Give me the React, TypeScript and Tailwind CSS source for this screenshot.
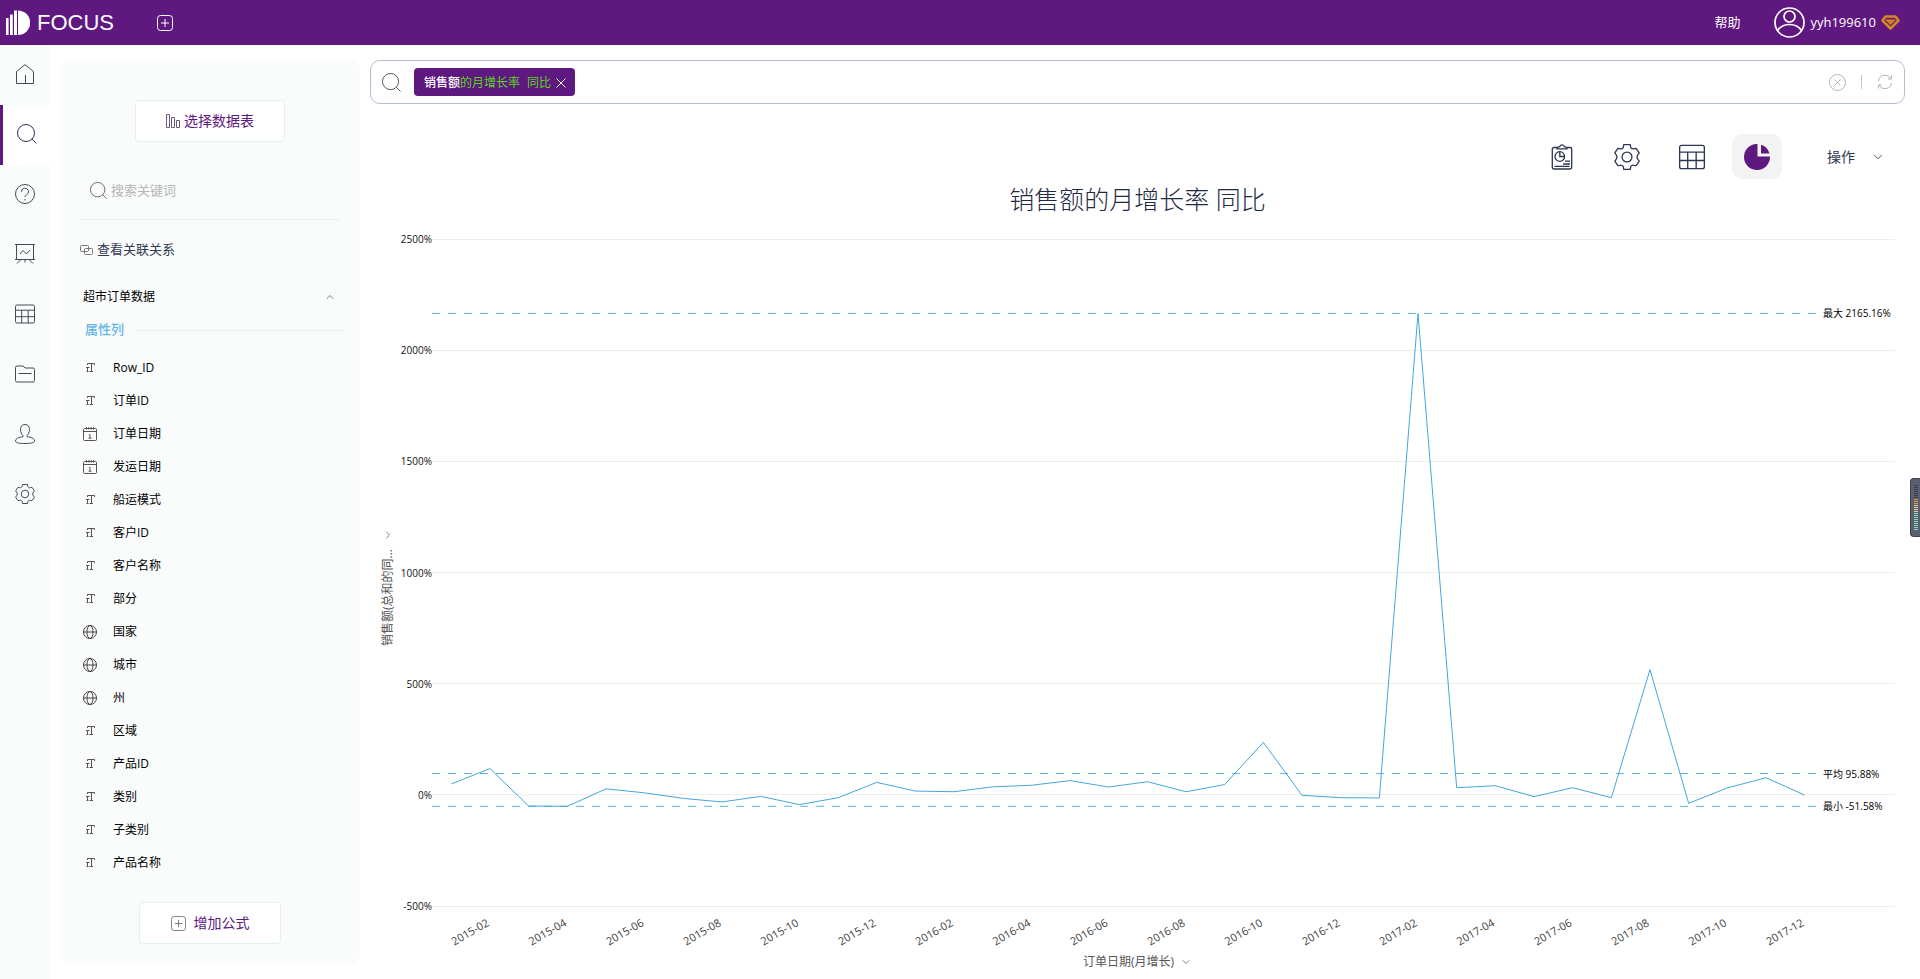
import { useLayoutEffect, useRef, useState, type ReactNode } from "react";
import { ChevronDown, ChevronLeft, ChevronUp } from "lucide-react";

const SERIES = [
  49, 118, -50.5, -51.58, 27, 9, -16, -32, -7, -44, -13, 56,
  17, 14, 36, 43, 64, 35, 59, 14, 46, 236, -2, -13,
  -14, 2165.16, 32, 41, -8, 32, -13, 563, -38, 31, 77, -1,
];

const Y_TICKS = [2500, 2000, 1500, 1000, 500, 0, -500];

const MARKS = [
  { label: "最大 2165.16%", value: 2165.16 },
  { label: "平均 95.88%", value: 95.88 },
  { label: "最小 -51.58%", value: -51.58 },
];

type ColumnType = "text" | "date" | "geo";

const COLUMNS: { name: string; type: ColumnType }[] = [
  { name: "Row_ID", type: "text" },
  { name: "订单ID", type: "text" },
  { name: "订单日期", type: "date" },
  { name: "发运日期", type: "date" },
  { name: "船运模式", type: "text" },
  { name: "客户ID", type: "text" },
  { name: "客户名称", type: "text" },
  { name: "部分", type: "text" },
  { name: "国家", type: "geo" },
  { name: "城市", type: "geo" },
  { name: "州", type: "geo" },
  { name: "区域", type: "text" },
  { name: "产品ID", type: "text" },
  { name: "类别", type: "text" },
  { name: "子类别", type: "text" },
  { name: "产品名称", type: "text" },
];

interface IconProps {
  size?: number;
  box?: number;
  className?: string;
  children?: ReactNode;
}

function Icon({ size = 20, box = 20, className, children }: IconProps) {
  return (
    <svg
      width={size}
      height={size}
      viewBox={`0 0 ${box} ${box}`}
      fill="none"
      stroke="currentColor"
      strokeWidth={1}
      className={className}
      aria-hidden="true"
    >
      {children}
    </svg>
  );
}

const HomeIcon = () => (
  <Icon>
    <path d="M1.500 19.500V7.500L10 .7l8.500 6.800v12zM10.500 19.500V11" />
  </Icon>
);

const SearchIcon = ({ size = 20, className }: IconProps) => (
  <Icon size={size} className={className}>
    <circle cx="9" cy="9" r="8.500" />
    <path d="M15 15l4.500 4.500" />
  </Icon>
);

const HelpIcon = () => (
  <Icon>
    <circle cx="10" cy="10" r="9.500" />
    <path d="M6.500 7.800a3.500 3.500 0 1 1 5 3c-1 .5-1.500 1-1.500 2.400M10 15v1.500" />
  </Icon>
);

const BoardIcon = () => (
  <Icon>
    <path d="M0 .5h20M1.500 .5v15h17V.5M0 15.500h20M6 15.500l-4 4M14 15.500l4 4M10 15.500v3M5 10l3-3.500 3.500 3.500 3.500-4" />
  </Icon>
);

const TableIcon = ({ size = 20 }: IconProps) => (
  <Icon size={size}>
    <rect x=".5" y="1" width="19" height="18" rx="1.500" />
    <path d="M.5 6.200h19M.5 12.700h19M6.700 6.200v12.800M13.200 6.200v12.800" />
  </Icon>
);

const FolderIcon = () => (
  <Icon>
    <path d="M.5 16.500v-13a1.500 1.500 0 0 1 1.500-1.500h6l2 2h8a1.500 1.500 0 0 1 1.500 1.500v11a1.500 1.500 0 0 1-1.500 1.500H2a1.500 1.500 0 0 1-1.500-1.500zM3.500 9.500h13" />
  </Icon>
);

const PersonIcon = () => (
  <Icon>
    <path d="M10 .5c2.900 0 4.500 2 4.500 5 0 2.500-1 4.700-2.500 6v1.200c4 .5 7.500 1.800 7.500 4.300 0 2-4.500 2.500-9.500 2.500S.5 19 .5 17c0-2.500 3.500-3.800 7.500-4.300v-1.200c-1.500-1.300-2.500-3.500-2.500-6 0-3 1.600-5 4.500-5z" />
  </Icon>
);

const GearIcon = ({ size = 20 }: IconProps) => (
  <Icon size={size}>
    <path
      d="M7.500 .5h5l.4 2.200c.8 1.100 1.700 1.200 2.600 .9l1.500-.3 2.400 3.500-.9 1.200c-1 1-1 3 0 4l.9 1.200-2.400 3.500-1.500-.3c-.9-.3-1.800-.2-2.600 .9l-.4 2.200h-5l-.4-2.200c-.8-1.100-1.700-1.200-2.600-.9l-1.500 .3-2.400-3.500 .9-1.200c1-1 1-3 0-4l-.9-1.200 2.400-3.500 1.500 .3c.9 .3 1.800 .2 2.600-.9z"
      strokeLinejoin="round"
    />
    <circle cx="10" cy="10" r="3.800" />
  </Icon>
);

const ReportIcon = () => (
  <Icon size={26} box={26}>
    <g strokeWidth="1.300">
      <path d="M8 3.500H5A1.700 1.700 0 0 0 3.300 5.200v18A1.700 1.700 0 0 0 5 25h16a1.700 1.700 0 0 0 1.700-1.700V5.200A1.700 1.700 0 0 0 21 3.500h-3" />
      <path d="M8 4.800c0-1.500 1.200-2 2.800-2.200C11.300 1.300 12 .8 13 .8s1.700 .5 2.200 1.800c1.600 .2 2.800 .7 2.800 2.200z" />
      <circle cx="10.800" cy="12.500" r="4.800" />
      <path d="M10.800 7.700v4.800h4.800M16 17.200h5M14 20h7M5.500 22.300h15" />
    </g>
  </Icon>
);

const PieIcon = () => (
  <svg width="26" height="26" viewBox="0 0 26 26" fill="currentColor" aria-hidden="true">
    <path d="M13.500 0v12.500H26A13 13 0 1 1 13.500 0z" />
    <path d="M17 .8A12.500 12.500 0 0 1 25.500 9.500H17z" />
  </svg>
);

const PlusBoxIcon = ({ size = 16, className }: IconProps) => (
  <Icon size={size} box={16} className={className}>
    <rect x=".5" y=".5" width="15" height="15" rx="3" />
    <path d="M8 4v8M4 8h8" />
  </Icon>
);

function ColumnIcon({ type }: { type: ColumnType }) {
  if (type === "date") {
    return (
      <Icon size={14} box={14} className="text-[#555]">
        <path d="M1.500 1.500h11a1 1 0 0 1 1 1v10a1 1 0 0 1-1 1h-11a1 1 0 0 1-1-1v-10a1 1 0 0 1 1-1zM.5 4.500h13M3.500 0v2.500M5.800 0v2.500M8.200 0v2.500M10.500 0v2.500M6 7.500h1v3.500M5.500 11.200h3" />
      </Icon>
    );
  }
  if (type === "geo") {
    return (
      <Icon size={14} box={14} className="text-[#444]">
        <circle cx="7" cy="7" r="6.500" />
        <ellipse cx="7" cy="7" rx="3" ry="6.500" />
        <path d="M.5 7h13" />
      </Icon>
    );
  }
  return (
    <Icon size={14} box={14} className="text-[#555]">
      <path d="M4.500 4V2.500h7v1.500M8.500 2.500v8M6.500 10.500h3.500M3 6.500h3.500M4.500 6.500v4M3.500 10.500h2" />
    </Icon>
  );
}

function Logo() {
  return (
    <a href="#" className="flex items-center gap-[7px] text-white">
      <svg width="24" height="26" viewBox="0 0 24 26" fill="currentColor" aria-hidden="true">
        <rect x="0" y="8" width="2.600" height="17" />
        <rect x="4" y="4.500" width="2.800" height="20.500" />
        <rect x="8" y=".5" width="3" height="24.500" />
        <path d="M12 .5a12.200 12.200 0 0 1 0 24.500z" />
      </svg>
      <span className="font-['Liberation_Sans',sans-serif] text-[22px] leading-6">FOCUS</span>
    </a>
  );
}

function Header() {
  return (
    <header className="flex h-[45px] shrink-0 items-center bg-[#5e187f] pr-5 pl-[6px] text-white">
      <Logo />
      <button type="button" aria-label="新建" className="ml-[43px]">
        <PlusBoxIcon />
      </button>
      <a href="#" className="ml-auto text-[13px]">
        帮助
      </a>
      <button type="button" className="ml-[34px] flex items-center gap-[5px]">
        <Icon size={31} box={31}>
          <g strokeWidth="1.700">
            <circle cx="15.500" cy="15.500" r="14.500" />
            <circle cx="15.500" cy="9.500" r="5.500" />
            <path d="M3.500 23.500c3-4.500 7-6 12-6s9 1.500 12 6" />
          </g>
        </Icon>
        <span className="text-[13px]">yyh199610</span>
        <svg width="19" height="15" viewBox="0 0 19 15" fill="none" stroke="#d5861d" aria-hidden="true">
          <path d="M4.500 1.500h10L17.500 5.500 9.500 13.500 1.500 5.500z" strokeWidth="2.600" strokeLinejoin="round" />
          <path d="M6.500 5.500h6l-3 3z" strokeWidth="2" />
        </svg>
      </button>
    </header>
  );
}

const NAV = [
  { label: "首页", icon: <HomeIcon /> },
  { label: "搜索", icon: <SearchIcon /> },
  { label: "帮助中心", icon: <HelpIcon /> },
  { label: "看板", icon: <BoardIcon /> },
  { label: "数据表", icon: <TableIcon /> },
  { label: "资源", icon: <FolderIcon /> },
  { label: "用户", icon: <PersonIcon /> },
  { label: "设置", icon: <GearIcon /> },
];

function NavRail() {
  return (
    <nav className="w-[50px] shrink-0 bg-[#fafcfb] text-[#444a56]">
      {NAV.map((item, i) => (
        <a
          key={item.label}
          href="#"
          aria-label={item.label}
          className={
            i === 1
              ? "flex h-15 items-center justify-center border-l-3 border-[#5e187f] bg-white pb-[2px] text-[#3b2a55]"
              : "flex h-15 items-center justify-center pb-[2px]"
          }
        >
          {item.icon}
        </a>
      ))}
    </nav>
  );
}

function DataPanel() {
  return (
    <aside className="flex w-[300px] shrink-0 flex-col rounded-[10px] bg-[#fafcfb] px-[15px] pt-10 pb-5">
      <button
        type="button"
        className="mx-auto flex h-[42px] w-[150px] shrink-0 items-center justify-center gap-1 rounded border border-[#e4eef5] bg-white text-sm text-[#5e187f]"
      >
        <Icon size={14} box={14} className="text-[#6d5a80]">
          <path d="M.5 .5h3v13h-3zM5.500 3.500h3v10h-3zM10.500 6.500h3v7h-3z" />
        </Icon>
        选择数据表
      </button>

      <label className="mx-[5px] mt-6 flex h-[54px] shrink-0 items-center gap-1 border-b border-[#eceeee] pb-1 pl-[10px]">
        <SearchIcon size={17} className="shrink-0 text-[#555]" />
        <input
          type="text"
          aria-label="搜索关键词"
          placeholder="搜索关键词"
          className="min-w-0 flex-1 text-[13px] outline-none placeholder:text-[#b5b5b5]"
        />
      </label>

      <a href="#" className="mt-5 ml-[5px] flex h-5 items-center gap-1 text-[13px] text-[#303a55]">
        <Icon size={13} box={13} className="text-[#777]">
          <rect x=".5" y="1.500" width="8" height="6" rx="1" />
          <rect x="4.500" y="4.500" width="8" height="6" rx="1" />
        </Icon>
        查看关联关系
      </a>

      <button
        type="button"
        className="mt-[27px] flex h-5 items-center justify-between pr-[9px] pl-2 text-xs text-black"
      >
        超市订单数据
        <ChevronUp size={12} strokeWidth={1.5} className="text-[#555]" />
      </button>

      <h3 className="mt-[13px] flex h-5 items-center gap-[10px] pl-[10px] text-[13px] font-medium text-[#64b5e6] after:h-px after:flex-1 after:bg-[#eceeee]">
        属性列
      </h3>

      <ul className="mt-[11px] text-xs text-black">
        {COLUMNS.map((col) => (
          <li key={col.name} className="flex h-[33px] items-center gap-4 pl-2">
            <ColumnIcon type={col.type} />
            {col.name}
          </li>
        ))}
      </ul>

      <button
        type="button"
        className="mx-auto mt-auto flex h-[42px] w-[142px] shrink-0 items-center justify-center gap-2 rounded border border-[#e4eef5] bg-white text-sm text-[#5e187f]"
      >
        <PlusBoxIcon size={15} className="text-[#777]" />
        增加公式
      </button>
    </aside>
  );
}

function SearchBar() {
  return (
    <div className="flex h-11 shrink-0 items-center rounded-[10px] border border-[#b3bfcd] px-[11px]">
      <SearchIcon size={19} className="shrink-0 text-[#4a4f5c]" />
      <span className="ml-[13px] flex h-7 items-center rounded bg-[#5e187f] pt-[2px] pr-[9px] pl-[10px] text-xs text-[#58d51c]">
        <b className="font-medium text-white">销售额</b>
        <span>的月增长率</span>
        <span className="ml-[7px]">同比</span>
        <button type="button" aria-label="移除" className="ml-[5px] text-white">
          <Icon size={10} box={10}>
            <path d="M.5 .5l9 9M9.500 .5l-9 9" />
          </Icon>
        </button>
      </span>
      <input type="text" aria-label="搜索" className="mx-2 min-w-0 flex-1 outline-none" />
      <button type="button" aria-label="清空" className="text-[#b5b5b5]">
        <Icon size={17} box={17}>
          <circle cx="8.500" cy="8.500" r="8" />
          <path d="M5.500 5.500l6 6M11.500 5.500l-6 6" />
        </Icon>
      </button>
      <span className="mx-[15px] h-[14px] w-px bg-[#c8c8c8]" />
      <button type="button" aria-label="刷新" className="text-[#b5b5b5]">
        <Icon size={16} box={16}>
          <path d="M1.500 7A6.500 6.500 0 0 1 13.800 5M14.500 9A6.500 6.500 0 0 1 2.200 11M14.500 1.500V5h-3.500M1.500 14.500V11H5" />
        </Icon>
      </button>
    </div>
  );
}

function Toolbar() {
  return (
    <div className="mt-[30px] flex h-[45px] shrink-0 items-center justify-end gap-[15px] pr-5 text-[#2b3650]">
      <button type="button" aria-label="报告" className="grid h-[45px] w-[50px] place-items-center">
        <ReportIcon />
      </button>
      <button type="button" aria-label="图表设置" className="grid h-[45px] w-[50px] place-items-center">
        <GearIcon size={26} />
      </button>
      <button type="button" aria-label="表格" className="grid h-[45px] w-[50px] place-items-center">
        <TableIcon size={26} />
      </button>
      <button
        type="button"
        aria-label="图形"
        className="grid h-[45px] w-[50px] place-items-center rounded-[10px] bg-[#f3f3f3] text-[#5e187f]"
      >
        <PieIcon />
      </button>
      <button type="button" className="ml-[30px] flex items-center gap-4 text-sm">
        操作
        <ChevronDown size={14} strokeWidth={1.5} />
      </button>
    </div>
  );
}

function LineChart() {
  const ref = useRef<HTMLDivElement>(null);
  const [size, setSize] = useState({ width: 0, height: 0 });

  useLayoutEffect(() => {
    const el = ref.current;
    if (!el) return;
    const measure = () => setSize({ width: el.clientWidth, height: el.clientHeight });
    measure();
    const observer = new ResizeObserver(measure);
    observer.observe(el);
    return () => observer.disconnect();
  }, []);

  const left = 36;
  const right = size.width - 81;
  const top = 20;
  const bottom = size.height - 46;
  const band = (right - left) / SERIES.length;
  const x = (i: number) => left + band * (i + 0.5);
  const y = (v: number) => top + ((2500 - v) / 3000) * (bottom - top);
  const month = (i: number) =>
    `${2015 + Math.floor(i / 12)}-${String((i % 12) + 1).padStart(2, "0")}`;

  return (
    <div ref={ref} className="min-h-0 min-w-0 flex-1 overflow-hidden">
      {size.width > 0 && (
        <svg width={size.width} height={size.height} className="block">
          {Y_TICKS.map((tick) => (
            <g key={tick}>
              <line
                x1={left}
                x2={size.width - 10}
                y1={Math.floor(y(tick)) + 0.5}
                y2={Math.floor(y(tick)) + 0.5}
                stroke="#eeeeee"
              />
              <text x={left} y={y(tick) + 4} textAnchor="end" className="fill-[#111] text-[10px]">
                {tick}%
              </text>
            </g>
          ))}
          {MARKS.map((mark) => (
            <g key={mark.label}>
              <line
                x1={left}
                x2={right - 2}
                y1={y(mark.value)}
                y2={y(mark.value)}
                stroke="#5db3e2"
                strokeDasharray="8 8"
              />
              <text x={right - 1} y={y(mark.value) + 4} className="fill-black text-[10px]">
                {mark.label}
              </text>
            </g>
          ))}
          <polyline
            points={SERIES.map((v, i) => `${x(i)},${y(v)}`).join(" ")}
            fill="none"
            stroke="#45a5dd"
            strokeLinejoin="bevel"
          />
          {SERIES.map((_, i) =>
            i % 2 === 1 ? (
              <text
                key={i}
                transform={`translate(${x(i)} ${bottom + 19}) rotate(-30)`}
                textAnchor="end"
                className="fill-[#444] text-[11px]"
              >
                {month(i)}
              </text>
            ) : null,
          )}
        </svg>
      )}
    </div>
  );
}

function ChartPane() {
  return (
    <>
      <h2 className="h-10 shrink-0 text-center text-[25px] leading-10 font-light text-[#1f2a45]">
        销售额的月增长率 同比
      </h2>
      <div className="flex min-h-0 flex-1">
        <button
          type="button"
          className="ml-[10px] flex w-4 rotate-180 items-center justify-center gap-2 pb-1 text-xs leading-4 text-[#555] [text-orientation:sideways] [writing-mode:vertical-rl]"
        >
          销售额(总和的同...
          <ChevronLeft size={12} strokeWidth={1.5} className="shrink-0" />
        </button>
        <LineChart />
      </div>
      <button
        type="button"
        className="mx-auto flex h-5 shrink-0 items-center gap-[6px] text-xs text-[#555]"
      >
        订单日期(月增长)
        <ChevronDown size={12} strokeWidth={1.5} />
      </button>
    </>
  );
}

const METER = [
  "bg-[#3c3e48]", "bg-[#3c3e48]", "bg-[#3c3e48]", "bg-[#3c3e48]", "bg-[#3c3e48]",
  "bg-[#3c3e48]", "bg-[#3c3e48]", "bg-[#d99a55]", "bg-[#d99a55]", "bg-[#d99a55]",
  "bg-[#efc9a0]", "bg-[#efc9a0]", "bg-[#efc9a0]", "bg-[#efc9a0]", "bg-[#8fdcae]",
  "bg-[#8fdcae]", "bg-[#8fdcae]", "bg-[#8fdcae]", "bg-[#8fdcae]", "bg-[#8fdcae]",
  "bg-[#8fdcae]", "bg-[#8fdcae]", "bg-[#8fdcae]",
];

function EdgeMeter() {
  return (
    <div className="fixed top-[478px] right-0 flex h-[59px] w-[10px] flex-col gap-px rounded-l border border-r-0 border-[#3f414b] bg-[#596070] pt-[6px] pl-[3px]">
      {METER.map((color, i) => (
        <span key={i} className={`h-px w-1 ${color}`} />
      ))}
    </div>
  );
}

export default function App() {
  return (
    <div className="flex h-screen min-h-[960px] flex-col bg-white font-['Open_Sans','Noto_Sans_CJK_SC',sans-serif]">
      <Header />
      <div className="flex min-h-0 flex-1">
        <NavRail />
        <div className="flex min-w-0 flex-1 gap-[10px] pr-[15px] pl-[10px]">
          <div className="flex py-[15px]">
            <DataPanel />
          </div>
          <main className="flex min-w-0 flex-1 flex-col pt-[15px] pb-[7px]">
            <SearchBar />
            <Toolbar />
            <ChartPane />
          </main>
        </div>
      </div>
      <EdgeMeter />
    </div>
  );
}
